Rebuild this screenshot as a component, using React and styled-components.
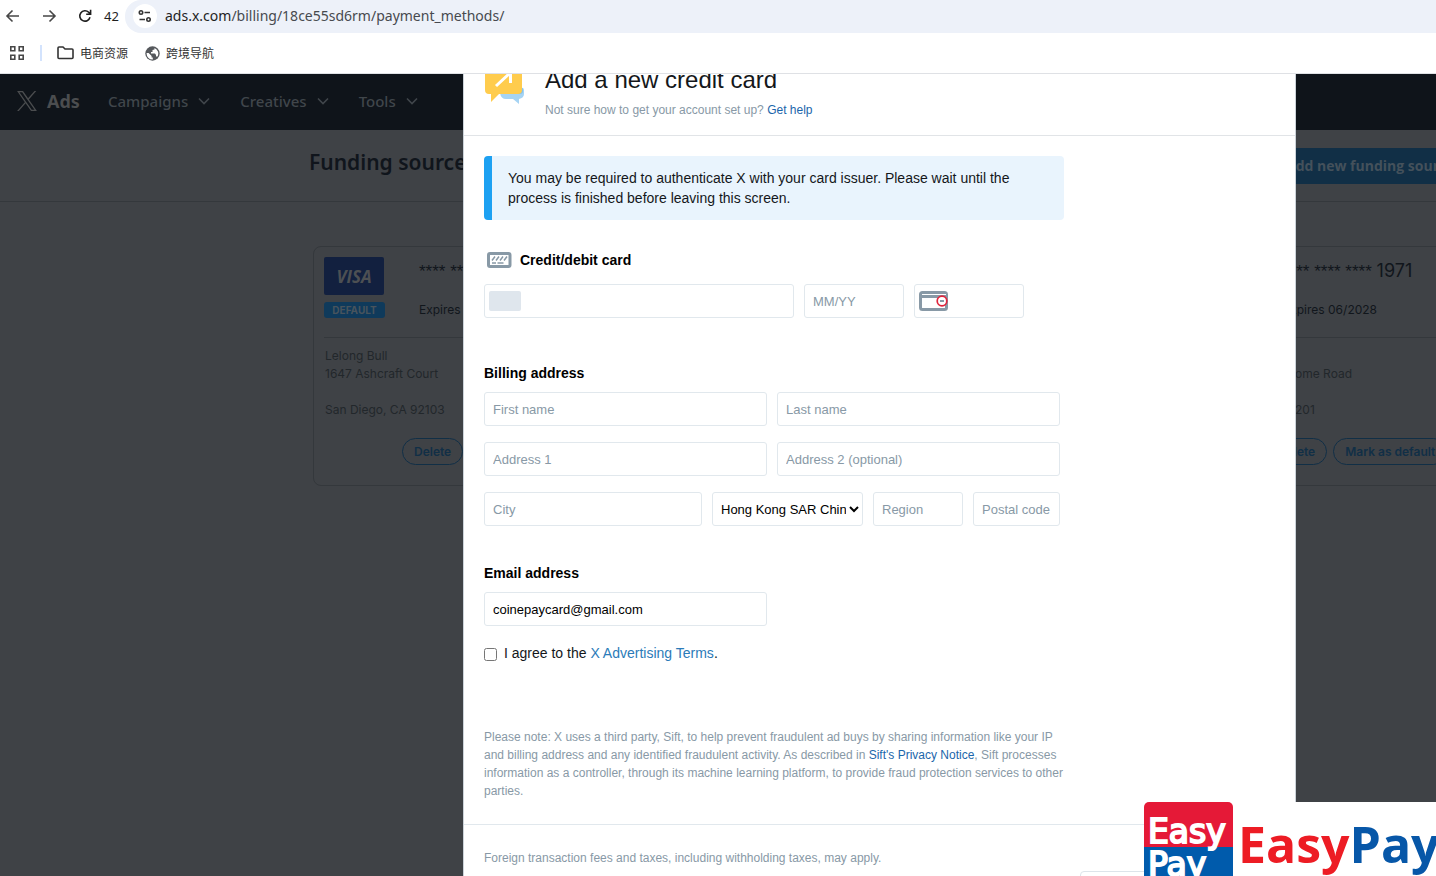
import React from "react";
import styled, { createGlobalStyle } from "styled-components";

const Global = createGlobalStyle`
  *, *::before, *::after { box-sizing: border-box; }
  html, body { margin: 0; height: 100%; overflow: hidden; }
  body { font-family: "Liberation Sans", Arial, sans-serif; color: #14171a; background: #fff; }
  h1, h2, h3, p { margin: 0; }
  button, input, select { font-family: inherit; }
`;

const Screen = styled.div`
  position: relative;
  height: 100vh;
  display: flex;
  flex-direction: column;
  overflow: hidden;
`;

/* Browser bars */
const Chrome = styled.header`
  flex: none;
  background: #fff;
  border-bottom: 1px solid #dfe1e5;
`;
const Toolbar = styled.div`
  display: flex;
  height: 33px;
`;
const NavButtons = styled.div`
  display: flex;
  align-items: center;
  gap: 20px;
  width: 125px;
  padding: 0 0 2px 5px;
`;
const IconButton = styled.button`
  display: flex;
  border: 0;
  padding: 0;
  background: none;
  color: #474747;
`;
const Reload = styled(IconButton)`
  align-items: center;
  gap: 12px;
  padding-left: 1px;
  color: #1f1f1f;
  font: 13px "Noto Sans", sans-serif;
`;
const AddressBar = styled.div`
  flex: 1;
  display: flex;
  align-items: center;
  gap: 8px;
  padding: 0 0 2px 8px;
  border-radius: 16px 0 0 16px;
  background: #edf1f9;
`;
const SiteInfo = styled.button`
  display: grid;
  place-items: center;
  width: 24px;
  height: 24px;
  border: 0;
  border-radius: 12px;
  padding: 0;
  background: #fff;
  color: #333;
`;
const Url = styled.span`
  font: 14px "Noto Sans", sans-serif;
  color: #474a4f;
  b { font-weight: 400; color: #1f1f1f; }
`;
const Bookmarks = styled.nav`
  display: flex;
  align-items: center;
  gap: 17px;
  height: 40px;
  padding-left: 9px;
`;
const Bookmark = styled.a`
  display: flex;
  align-items: center;
  gap: 6px;
  color: #333;
  text-decoration: none;
  font: 12px/16px "Noto Sans CJK SC", sans-serif;
`;
const Divider = styled.span`
  width: 2px;
  height: 16px;
  margin: 0 -2px;
  background: #d3e3fd;
`;

/* Dimmed page behind the dialog */
const Viewport = styled.main`
  position: relative;
  flex: 1;
  min-height: 0;
  overflow: hidden;
  background: #3f4246;
`;
const AdsNav = styled.nav`
  display: flex;
  align-items: center;
  height: 56px;
  padding: 0 0 2px 17px;
  background: #0f141a;
  color: #40464b;
  font-family: "Noto Sans", sans-serif;
`;
const Brand = styled.span`
  display: flex;
  align-items: center;
  gap: 10px;
  width: 91px;
  color: #4b4d4f;
  font-size: 18px;
  font-weight: 700;
`;
const NavItem = styled.button`
  display: flex;
  align-items: center;
  gap: 10px;
  margin-right: 30px;
  border: 0;
  padding: 0;
  background: none;
  color: inherit;
  font: 500 15px "Noto Sans", sans-serif;
`;
const TitleBand = styled.div`
  display: flex;
  justify-content: space-between;
  align-items: center;
  height: 72px;
  padding-left: 309px;
  border-bottom: 1px solid #34383c;
`;
const PageTitle = styled.h1`
  padding-bottom: 8px;
  color: #10151c;
  font: 600 21px "Noto Sans", sans-serif;
`;
const AddSource = styled.button`
  width: 160px;
  height: 36px;
  border: 0;
  padding: 0 0 0 10px;
  overflow: hidden;
  background: #112f46;
  color: #44515b;
  font: 700 14px "Open Sans", sans-serif;
  text-align: left;
  white-space: nowrap;
`;
const Cards = styled.div`
  display: grid;
  grid-template-columns: repeat(3, 420px);
  gap: 12px;
  padding: 44px 0 0 313px;
`;
const SourceCard = styled.article`
  grid-column: ${(p) => p.$column};
  height: 240px;
  padding: 10px;
  border: 1px solid #34383c;
  border-radius: 8px;
  color: #11161c;
  font-family: Inter, sans-serif;
  font-size: 12px;
`;
const CardTop = styled.div`
  display: grid;
  grid-template-columns: 62px 1fr;
  gap: 33px;
  height: 81px;
  border-bottom: 1px solid #34383c;
`;
const Visa = styled.div`
  display: grid;
  place-items: center;
  width: 60px;
  height: 38px;
  border-radius: 2px;
  background: #12203f;
  color: #4d5053;
  font: italic 700 17px "Open Sans", sans-serif;
`;
const DefaultTag = styled.span`
  display: block;
  width: 61px;
  margin-top: 7px;
  border-radius: 3px;
  background: #0f3a5b;
  color: #48545d;
  font: 700 10px/16px Inter, sans-serif;
  text-align: center;
`;
const CardNumber = styled.p`
  font-size: 18px;
  line-height: 28px;
`;
const Mask = styled.span`
  font-family: "Liberation Sans", Arial, sans-serif;
  font-size: 17px;
`;
const Expires = styled.p`
  margin-top: 16px;
  line-height: 16px;
`;
const Address = styled.p`
  height: 90px;
  padding: 9px 0 0 ${(p) => p.$indent}px;
  color: #22272b;
  line-height: 18px;
  white-space: pre-line;
`;
const CardActions = styled.div`
  display: flex;
  gap: 6px;
  margin: 10px 0 0 78px;
`;
const PillButton = styled.button`
  height: 27px;
  border: 1px solid #112f46;
  border-radius: 14px;
  padding: 0 11px;
  background: none;
  color: #112f46;
  font: 600 12px Inter, sans-serif;
  white-space: nowrap;
`;

/* Dialog, scrolled a little past its top edge */
const Overlay = styled.div`
  position: absolute;
  inset: -8px 0 0;
  display: flex;
  padding: 0 140px 0 463px;
`;
const Dialog = styled.section`
  flex: 1;
  min-width: 0;
  background: #fff;
  border: solid #ccd3d9;
  border-width: 0 1px;
`;
const DialogHead = styled.header`
  display: flex;
  gap: 20px;
  padding: 0 20px 17px;
  border-bottom: 1px solid #e1e4e7;
`;
const DialogTitle = styled.h2`
  font-size: 24px;
  font-weight: 400;
  line-height: 28px;
`;
const HelpText = styled.p`
  margin-top: 8px;
  color: #8899a6;
  font-size: 12px;
  line-height: 16px;
`;
const Link = styled.a`
  color: ${(p) => (p.$strong ? "#1b66ab" : "#2b7bb9")};
  text-decoration: none;
`;
const Form = styled.form`
  width: 620px;
  padding: 20px 20px 24px;
`;
const Notice = styled.p`
  padding: 12px 16px;
  border-left: 8px solid #1da1f2;
  border-radius: 4px;
  background: #e9f4fd;
  font-size: 14px;
  line-height: 20px;
`;
const Group = styled.fieldset`
  min-width: 0;
  margin: ${(p) => p.$top}px 4px 0 0;
  border: 0;
  padding: 0;
`;
const Label = styled.h3`
  display: flex;
  align-items: center;
  gap: 8px;
  margin-bottom: ${(p) => (p.$icon ? 14 : 9)}px;
  padding-left: ${(p) => (p.$icon ? 3 : 0)}px;
  color: #000;
  font-size: 14px;
  font-weight: 700;
  line-height: 20px;
`;
const Row = styled.div`
  display: grid;
  grid-template-columns: ${(p) => p.$columns};
  gap: 10px;
  & + & { margin-top: 16px; }
`;
const Input = styled.input`
  width: 100%;
  height: 34px;
  border: 1px solid #e1e8ed;
  border-radius: 3px;
  padding: 0 8px;
  background: #fff;
  color: #000;
  font-size: 13px;
  &::placeholder { color: #8899a6; opacity: 1; }
`;
const Select = styled.select`
  width: 100%;
  height: 34px;
  border: 1px solid #e1e8ed;
  border-radius: 3px;
  padding: 0 0 0 4px;
  background: #fff;
  color: #000;
  font-size: 13px;
`;
const IconField = styled.div`
  display: flex;
  align-items: center;
  height: 34px;
  border: 1px solid #e1e8ed;
  border-radius: 3px;
  padding-left: 4px;
  input { flex: 1; min-width: 0; height: 30px; border: 0; outline: 0; background: none; }
`;
const CardChip = styled.span`
  width: 32px;
  height: 20px;
  border-radius: 2px;
  background: #dfe6ed;
`;
const Agree = styled.label`
  display: flex;
  align-items: center;
  gap: 7px;
  margin-top: 17px;
  font-size: 14px;
  line-height: 20px;
  input { width: 13px; height: 13px; margin: 2px 0 0; }
`;
const Fine = styled.p`
  color: #8899a6;
  font-size: 12px;
  line-height: 18px;
`;
const PrivacyNote = styled(Fine)`
  margin-top: 65px;
`;
const DialogFoot = styled.footer`
  display: flex;
  flex-direction: column;
  gap: 4px;
  padding: 24px 20px;
  border-top: 1px solid #e1e8ed;
`;
const FootButton = styled.button`
  align-self: flex-end;
  width: 195px;
  height: 36px;
  border: 1px solid #dde4ea;
  border-radius: 4px;
  background: #fff;
`;

/* Corner watermark */
const Watermark = styled.aside`
  position: absolute;
  right: 0;
  bottom: 0;
  display: flex;
  gap: 5px;
  width: 292px;
  height: 74px;
  overflow: hidden;
  background: #fff;
`;
const Badge = styled.div`
  flex: none;
  width: 89px;
  height: 90px;
  padding: 13px 0 0 4px;
  border-radius: 5px;
  background: linear-gradient(#e51937 45px, #005bac 45px);
  color: #fff;
  font: 33px/33px "DejaVu Sans", sans-serif;
  -webkit-text-stroke: 2px #fff;
  span { display: block; }
`;
const WordMark = styled.strong`
  padding-top: 9px;
  color: #ed1c24;
  font: 700 50px/66px "Open Sans", sans-serif;
  span { color: #0757a8; }
`;

const stroke = { fill: "none", stroke: "currentColor", strokeWidth: 1.6 };

const Arrow = ({ flip }) => (
  <svg width="16" height="16" viewBox="0 0 16 16" {...stroke}>
    <path d={flip ? "M2 8h11.500M8.500 2.500 14 8l-5.500 5.500" : "M14 8H2.500M7.500 2.500 2 8l5.500 5.500"} />
  </svg>
);
const Chevron = () => (
  <svg width="12" height="8" viewBox="0 0 12 8" {...stroke}>
    <path d="m1 1.500 5 5 5-5" />
  </svg>
);
const XLogo = () => (
  <svg width="20" height="20" viewBox="0 0 24 24" fill="currentColor">
    <path d="M14.250 10.200 23.100 0H21l-7.700 8.800L7.200 0H.1l9.300 13.400L.1 24h2.100l8.100-9.300 6.500 9.300h7.100Zm-2.900 3.300-.9-1.300L2.900 1.600h3.300l6 8.500.9 1.300 7.900 11.200h-3.300Z" />
  </svg>
);
const Bubble = () => (
  <svg width="41" height="38" viewBox="0 0 41 38">
    <path d="M17 22h20q3-1 3 3v3q0 4-5 5v5l-6-5h-7q-5 0-6-6Z" fill="#a6d4f4" />
    <path d="M17 22h20q2-1 2 3 0 3-3 3H20q-3 0-3-3Z" fill="#83c1ec" />
    <path d="M1 0h37v24q0 4-4 4H15l-8 8v-8H5q-4 0-4-4Z" fill="#ffcc4d" />
    <path d="m12 20 14-13M15 6.500h11.500V17" fill="none" stroke="#fff" strokeWidth="3" />
  </svg>
);
const CardIcon = () => (
  <svg width="25" height="16" viewBox="0 0 25 16" fill="none" stroke="#8899a6">
    <rect x="1.500" y="1.500" width="21.500" height="13" rx="1.500" strokeWidth="3" />
    <path d="m5 8.500 3-4m1 4 3-4m1 4 3-4m1 4 3-4" strokeWidth="1.500" />
    <path d="M5 11h4m1.500 0h6" strokeWidth="1.500" />
  </svg>
);
const CvvIcon = () => (
  <svg width="30" height="20" viewBox="0 0 30 20" fill="none" stroke="#8899a6">
    <rect x="1.500" y="1.500" width="26" height="17" rx="2" strokeWidth="3" />
    <path d="M2 5h25" strokeWidth="4" />
    <path d="M3 3.500h24" stroke="#fff" />
    <circle cx="23" cy="10" r="4.800" fill="#fff" stroke="#e0243c" strokeWidth="1.700" />
    <path d="M21 10h4" strokeWidth="2" />
  </svg>
);

function FundingCard({ column, isDefault, mask, digits, expires, address, indent = 1 }) {
  return (
    <SourceCard $column={column}>
      <CardTop>
        <div>
          <Visa>VISA</Visa>
          {isDefault && <DefaultTag>DEFAULT</DefaultTag>}
        </div>
        <div>
          <CardNumber><Mask>{mask}</Mask>{digits}</CardNumber>
          <Expires>{expires}</Expires>
        </div>
      </CardTop>
      <Address $indent={indent}>{address}</Address>
      <CardActions>
        <PillButton>Delete</PillButton>
        {!isDefault && <PillButton>Mark as default</PillButton>}
      </CardActions>
    </SourceCard>
  );
}

export default function App() {
  return (
    <Screen>
      <Global />
      <Chrome>
        <Toolbar>
          <NavButtons>
            <IconButton aria-label="Back"><Arrow /></IconButton>
            <IconButton aria-label="Forward"><Arrow flip /></IconButton>
            <Reload aria-label="Reload">
              <svg width="14" height="14" viewBox="0 0 14 14" {...stroke}>
                <path d="M12 8.300A5.200 5.200 0 1 1 10.700 3.300L12.300 5M12.600.8V5.200H8.200" />
              </svg>
              42
            </Reload>
          </NavButtons>
          <AddressBar>
            <SiteInfo aria-label="Site information">
              <svg width="14" height="12" viewBox="0 0 14 12" {...stroke}>
                <circle cx="3" cy="2.500" r="1.700" />
                <path d="M6.500 2.500H12M1.500 9.500H7" />
                <circle cx="10.500" cy="9.500" r="1.700" />
              </svg>
            </SiteInfo>
            <Url><b>ads.x.com</b>/billing/18ce55sd6rm/payment_methods/</Url>
          </AddressBar>
        </Toolbar>
        <Bookmarks>
          <IconButton aria-label="Apps">
            <svg width="16" height="16" viewBox="0 0 16 16" {...stroke}>
              <path d="M1.800 1.800h4v4h-4zM10.200 1.800h4v4h-4zM1.800 10.200h4v4h-4zM10.200 10.200h4v4h-4z" />
            </svg>
          </IconButton>
          <Divider />
          <Bookmark href="#">
            <svg width="17" height="14" viewBox="0 0 17 14" {...stroke}>
              <path d="M1 2q0-1 1-1h4l2 2h7q1 0 1 1v7.500q0 1-1 1H2q-1 0-1-1Z" />
            </svg>
            电商资源
          </Bookmark>
          <Bookmark href="#">
            <svg width="15" height="15" viewBox="0 0 15 15">
              <circle cx="7.500" cy="7.500" r="7.200" fill="#55585c" />
              <path d="M9.500 2v1.500L7.500 4v2H6v1.500h4l1 1.500v1.500h1.500A6 6 0 0 0 9.500 2ZM1.600 7h2l3 3v1.500h1.200v2A6 6 0 0 1 1.600 7Z" fill="#fff" />
            </svg>
            跨境导航
          </Bookmark>
        </Bookmarks>
      </Chrome>

      <Viewport>
        <AdsNav>
          <Brand><XLogo />Ads</Brand>
          <NavItem>Campaigns <Chevron /></NavItem>
          <NavItem>Creatives <Chevron /></NavItem>
          <NavItem>Tools <Chevron /></NavItem>
        </AdsNav>
        <TitleBand>
          <PageTitle>Funding sources</PageTitle>
          <AddSource>Add new funding source</AddSource>
        </TitleBand>
        <Cards>
          <FundingCard
            column={1}
            isDefault
            mask="**** ****"
            expires="Expires"
            address={"Lelong Bull\n1647 Ashcraft Court\n\nSan Diego, CA 92103"}
          />
          <FundingCard
            column={3}
            mask="**** **** **** "
            digits="1971"
            expires="Expires 06/2028"
            address={"\nome Road\n\n201"}
            indent={107}
          />
        </Cards>

        <Overlay>
          <Dialog role="dialog" aria-labelledby="dialog-title">
            <DialogHead>
              <Bubble />
              <div>
                <DialogTitle id="dialog-title">Add a new credit card</DialogTitle>
                <HelpText>
                  Not sure how to get your account set up? <Link $strong href="#">Get help</Link>
                </HelpText>
              </div>
            </DialogHead>
            <Form>
              <Notice>
                You may be required to authenticate X with your card issuer. Please wait until the process is
                finished before leaving this screen.
              </Notice>

              <Group $top={30}>
                <Label $icon><CardIcon />Credit/debit card</Label>
                <Row $columns="310px 100px 110px">
                  <IconField><CardChip /><input aria-label="Card number" /></IconField>
                  <Input aria-label="Expiry date" placeholder="MM/YY" />
                  <IconField><CvvIcon /><input aria-label="Security code" /></IconField>
                </Row>
              </Group>

              <Group $top={45}>
                <Label>Billing address</Label>
                <Row $columns="1fr 1fr">
                  <Input aria-label="First name" placeholder="First name" />
                  <Input aria-label="Last name" placeholder="Last name" />
                </Row>
                <Row $columns="1fr 1fr">
                  <Input aria-label="Address 1" placeholder="Address 1" />
                  <Input aria-label="Address 2" placeholder="Address 2 (optional)" />
                </Row>
                <Row $columns="1fr 151px 90px 87px">
                  <Input aria-label="City" placeholder="City" />
                  <Select aria-label="Country"><option>Hong Kong SAR China</option></Select>
                  <Input aria-label="Region" placeholder="Region" />
                  <Input aria-label="Postal code" placeholder="Postal code" />
                </Row>
              </Group>

              <Group $top={37}>
                <Label as="label" htmlFor="email">Email address</Label>
                <Row $columns="1fr 1fr">
                  <Input id="email" type="email" defaultValue="coinepaycard@gmail.com" />
                </Row>
                <Agree>
                  <input type="checkbox" />
                  <span>I agree to the <Link href="#">X Advertising Terms</Link>.</span>
                </Agree>
              </Group>

              <PrivacyNote>
                Please note: X uses a third party, Sift, to help prevent fraudulent ad buys by sharing information
                like your IP and billing address and any identified fraudulent activity. As described in{" "}
                <Link $strong href="#">Sift's Privacy Notice</Link>, Sift processes information as a controller,
                through its machine learning platform, to provide fraud protection services to other parties.
              </PrivacyNote>
            </Form>
            <DialogFoot>
              <Fine>Foreign transaction fees and taxes, including withholding taxes, may apply.</Fine>
              <FootButton type="button" aria-label="Cancel" />
            </DialogFoot>
          </Dialog>
        </Overlay>
      </Viewport>

      <Watermark>
        <Badge><span>Easy</span><span>Pay</span></Badge>
        <WordMark>Easy<span>Pay</span></WordMark>
      </Watermark>
    </Screen>
  );
}
